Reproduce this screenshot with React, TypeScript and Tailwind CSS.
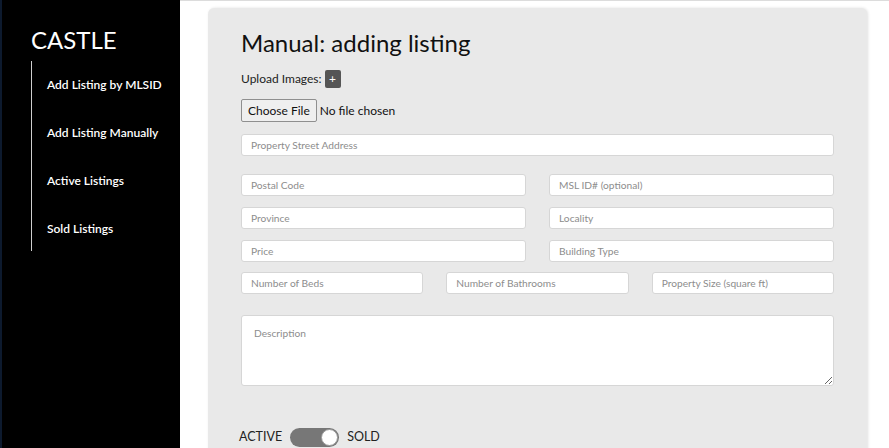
const navItems = [
  "Add Listing by MLSID",
  "Add Listing Manually",
  "Active Listings",
  "Sold Listings",
];

function Field({ placeholder, className = "" }: { placeholder: string; className?: string }) {
  return (
    <input
      type="text"
      placeholder={placeholder}
      className={`h-[22px] bg-white border border-[#d6d6d6] rounded-[3px] px-[9px] text-[10.2px] text-gray-700 placeholder:text-[#8d8d8d] outline-none ${className}`}
    />
  );
}

export default function App() {
  return (
    <div className="flex h-[448px] overflow-hidden bg-white font-['Lato','Open_Sans',sans-serif]">
      <aside className="w-[180px] shrink-0 bg-black border-l-2 border-[#0d1a2e] pl-[29px] pt-[26px]">
        <h1 className="text-[24px] leading-[28px] text-white font-normal">CASTLE</h1>
        <nav className="mt-[7px] border-l border-[#cfcfcf] pl-[15px] pt-[16px] h-[190px] flex flex-col gap-[32px]">
          {navItems.map((item) => (
            <a key={item} className="text-[12px] leading-[16px] text-white font-semibold">
              {item}
            </a>
          ))}
        </nav>
      </aside>

      <main className="flex-1 border-t border-[#dcdcdc] pl-[28px] pt-[7px]">
        <section className="w-[659px] h-[460px] bg-[#e9e9e9] rounded-[6px] shadow-[1px_0_3px_rgba(0,0,0,0.12)] px-[33px] pt-[20px]">
          <h2 className="text-[24px] leading-[30px] text-[#111]">Manual: adding listing</h2>

          <div className="mt-[12px] flex items-center gap-[3px] text-[12px] text-[#222]">
            <span>Upload Images:</span>
            <button className="w-[16px] h-[18px] bg-[#555] rounded-[2px] text-white text-[12px] leading-[18px]">+</button>
          </div>

          <div className="mt-[11px] flex items-center gap-[3px] text-[12px] text-[#111]">
            <button className="h-[23px] px-[6px] bg-[#efefef] border border-[#8f8f8f] rounded-[2px] text-[12px]">
              Choose File
            </button>
            <span>No file chosen</span>
          </div>

          <div className="mt-[12px] flex flex-col">
            <Field placeholder="Property Street Address" className="w-full" />

            <div className="mt-[18px] grid grid-cols-2 gap-x-[23px] gap-y-[11px]">
              <Field placeholder="Postal Code" />
              <Field placeholder="MSL ID# (optional)" />
              <Field placeholder="Province" />
              <Field placeholder="Locality" />
              <Field placeholder="Price" />
              <Field placeholder="Building Type" />
            </div>

            <div className="mt-[10px] grid grid-cols-3 gap-x-[23px]">
              <Field placeholder="Number of Beds" />
              <Field placeholder="Number of Bathrooms" />
              <Field placeholder="Property Size (square ft)" />
            </div>

            <textarea
              placeholder="Description"
              className="mt-[21px] h-[71px] bg-white border border-[#d6d6d6] rounded-[3px] px-[12px] py-[10px] text-[10.2px] placeholder:text-[#8d8d8d] outline-none"
            />
          </div>

          <div className="mt-[42px] -ml-[2px] flex items-center gap-[8px] text-[12.5px] text-[#222]">
            <span>ACTIVE</span>
            <div className="w-[49px] h-[19px] rounded-full bg-[#777] flex items-center justify-end pr-[1px]">
              <div className="w-[17px] h-[17px] rounded-full bg-white border border-[#999]" />
            </div>
            <span>SOLD</span>
          </div>
        </section>
      </main>
    </div>
  );
}
